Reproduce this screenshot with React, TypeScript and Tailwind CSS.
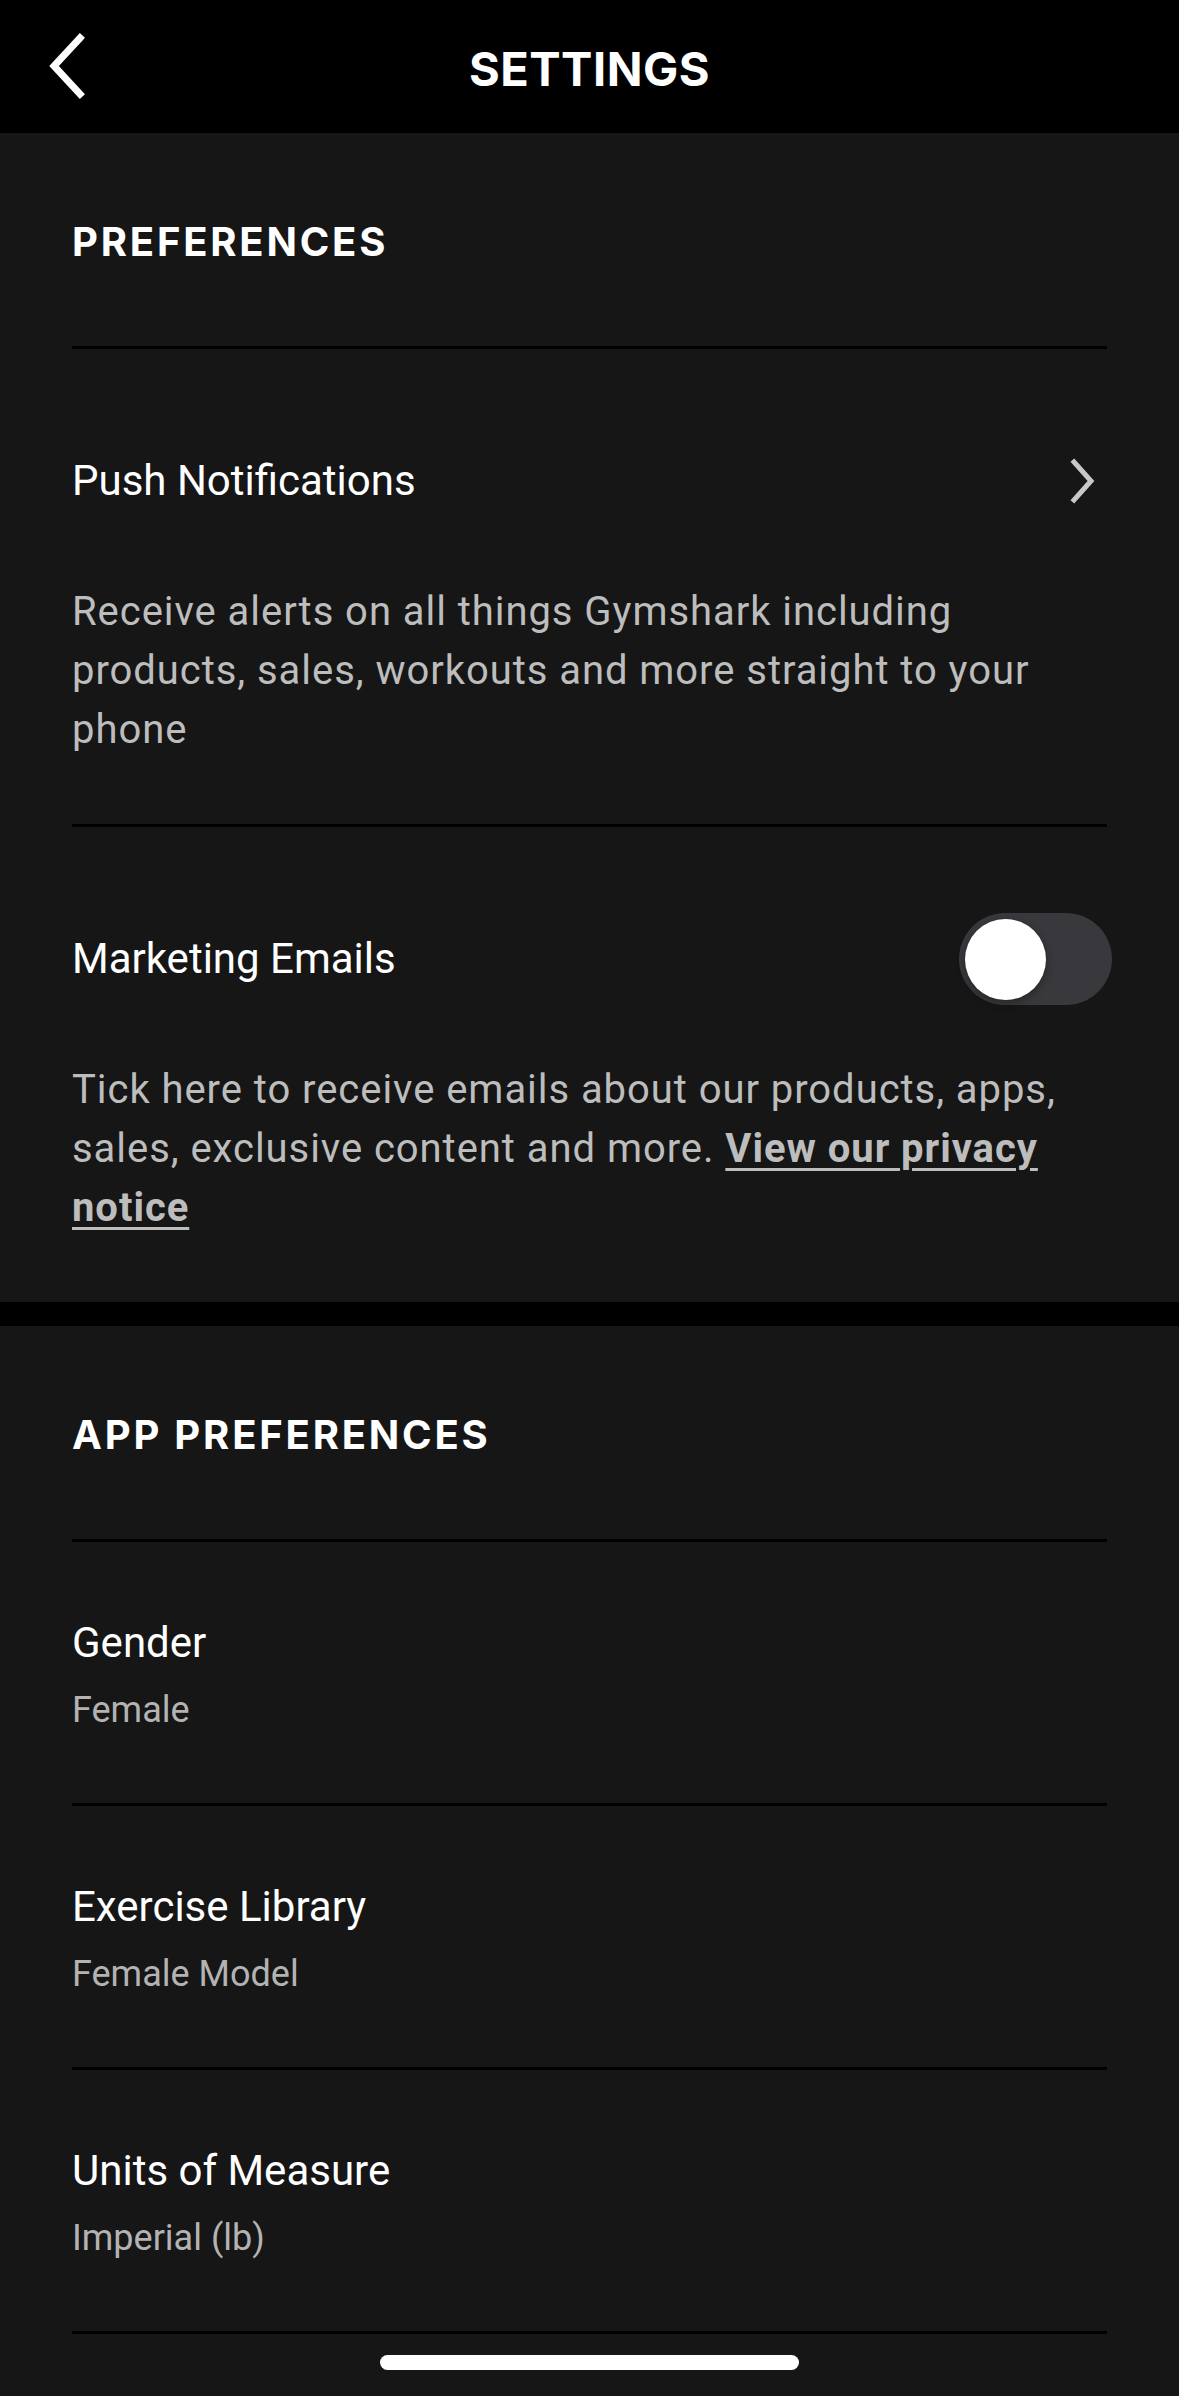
import React from 'react';

const heading = "font-['Inter','Liberation_Sans',sans-serif] font-bold text-white";
const body = "font-['Roboto','Liberation_Sans',sans-serif]";

const Divider = () => <div className="h-[3px] bg-black" />;

const SectionTitle = ({ title }: { title: string }) => (
  <div className="h-[213px] pt-[85px]">
    <h2 className={`${heading} text-[40px] leading-[48px] tracking-[2.8px]`}>{title}</h2>
  </div>
);

const Toggle = () => (
  <div className="w-[153px] h-[92px] -mr-[5px] rounded-full bg-[#39393d] flex items-center pl-[6px]">
    <div className="w-[81px] h-[81px] rounded-full bg-white shadow-[0_3px_8px_rgba(0,0,0,0.35)]" />
  </div>
);

const ChevronRight = () => (
  <svg width="30" height="46" viewBox="0 0 30 46" className="mr-[8px]">
    <path d="M5 4 L22 23 L5 42" fill="none" stroke="#c8c8c8" strokeWidth="5" strokeLinecap="square" />
  </svg>
);

interface ToggleRowProps {
  title: string;
  right: React.ReactNode;
  children: React.ReactNode;
}

const ToggleRow: React.FC<ToggleRowProps> = ({ title, right, children }) => (
  <div className="pt-[108px] pb-[65px]">
    <div className="h-[48px] flex items-center justify-between">
      <span className={`${body} text-[42px] leading-[48px] text-white`}>{title}</span>
      {right}
    </div>
    <p className={`${body} mt-[77px] max-w-[1015px] text-[40px] leading-[59px] tracking-[0.95px] text-[#bdbdbd]`}>
      {children}
    </p>
  </div>
);

const ValueRow = ({ title, value }: { title: string; value: string }) => (
  <div className="pt-[77px] pb-[72px]">
    <div className={`${body} text-[42px] leading-[48px] text-white`}>{title}</div>
    <div className={`${body} mt-[22px] text-[36px] leading-[42px] text-[#b3b3b3]`}>{value}</div>
  </div>
);

export default function App() {
  return (
    <div className="relative min-h-[2396px] bg-[#161616]">
      <header className="relative h-[133px] bg-black flex items-center justify-center">
        <svg width="50" height="80" viewBox="0 0 50 80" className="absolute left-[42px] top-[27px]">
          <path d="M38 11 L12 39 L38 67" fill="none" stroke="#ffffff" strokeWidth="7" strokeLinecap="square" />
        </svg>
        <h1 className={`${heading} text-[47px] leading-[56px] tracking-[0.5px] mt-[4px]`}>SETTINGS</h1>
      </header>

      <section className="px-[72px]">
        <SectionTitle title="PREFERENCES" />
        <Divider />
        <ToggleRow title="Push Notifications" right={<ChevronRight />}>
          Receive alerts on all things Gymshark including products, sales, workouts and more straight to your phone
        </ToggleRow>
        <Divider />
        <ToggleRow title="Marketing Emails" right={<Toggle />}>
          Tick here to receive emails about our products, apps, sales, exclusive content and more.{' '}
          <a className="font-bold underline decoration-[3px] underline-offset-[6px]">View our privacy notice</a>
        </ToggleRow>
      </section>

      <div className="h-[24px] bg-black" />

      <section className="px-[72px]">
        <SectionTitle title="APP PREFERENCES" />
        <Divider />
        <ValueRow title="Gender" value="Female" />
        <Divider />
        <ValueRow title="Exercise Library" value="Female Model" />
        <Divider />
        <ValueRow title="Units of Measure" value="Imperial (lb)" />
        <Divider />
      </section>

      <div className="absolute left-[380px] bottom-[26px] w-[419px] h-[15px] rounded-full bg-white" />
    </div>
  );
}
